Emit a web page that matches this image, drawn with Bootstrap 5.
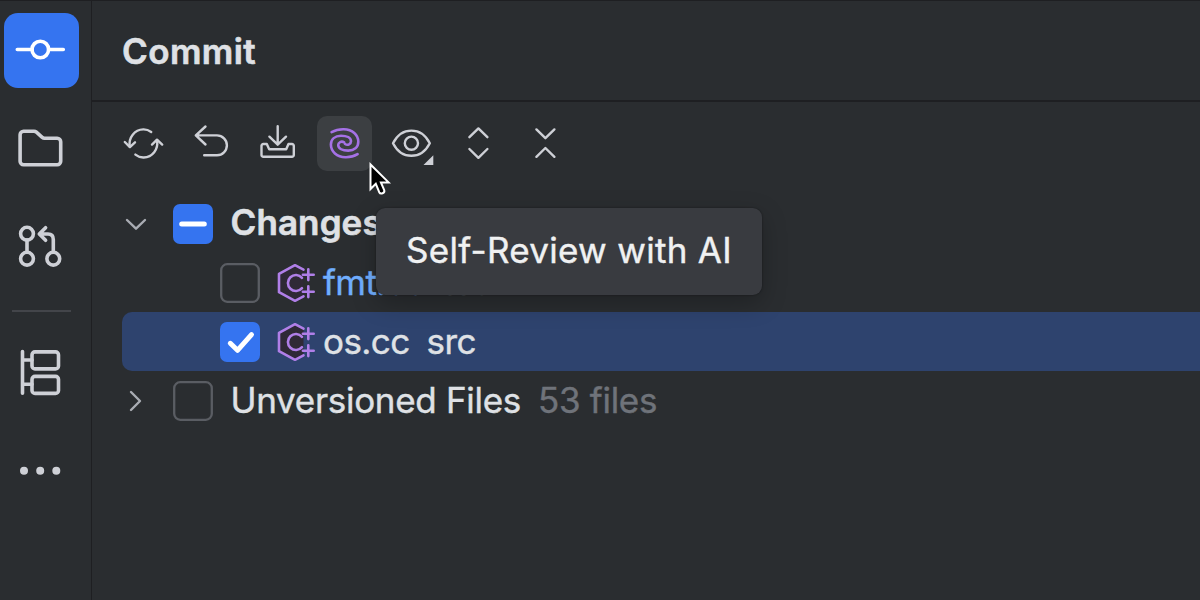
<!DOCTYPE html>
<html lang="en" data-bs-theme="dark">

<head>
    <meta charset="UTF-8">
    <meta name="viewport" content="width=device-width, initial-scale=1.0">
    <title>Commit</title>
    <link href="https://cdn.jsdelivr.net/npm/bootstrap@5.3.3/dist/css/bootstrap.min.css" rel="stylesheet">
    <style>
        body {
            background: #2a2d30;
            color: #dfe1e5;
            font-family: Inter, "Liberation Sans", sans-serif;
            font-size: 35px;
            line-height: 1;
        }

        svg {
            display: block;
            flex: none;
            fill: none;
            stroke: #ced0d6;
            stroke-linecap: round;
            stroke-linejoin: round;
        }

        .ide-window {
            height: 600px;
            border-top: 1px solid #1e1f22;
        }

        /* left tool window stripe */
        .side-stripe {
            width: 92px;
            padding: 12px 0 0 4px;
            gap: 23px;
            border-right: 1px solid #1e1f22;
        }

        .side-btn {
            width: 75px;
            height: 75px;
            border-radius: 14px;
            stroke-width: 3.6;
        }

        .side-btn.selected {
            background: #3574f0;
            stroke: #fff;
        }

        .side-divider {
            width: 59px;
            height: 2px;
            margin: 3px 0 0 8px;
            background: #43454a;
        }

        .panel-title {
            height: 100.5px;
            padding: 2px 0 0 30px;
            border-bottom: 2px solid #1e1f22;
            font-weight: 600;
            letter-spacing: 0.4px;
            -webkit-text-stroke: 0.6px;
        }

        .toolbar {
            padding: 14.5px 0 0 24px;
            gap: 12px;
        }

        .tool-btn {
            width: 55px;
            height: 55px;
            border-radius: 10px;
            stroke-width: 2.4;
        }

        .tool-btn.hovered {
            background: #3c3f42;
            stroke: #a571e6;
            stroke-width: 2.6;
        }

        .file-tree {
            padding: 23px 0 0 30px;
        }

        .tree-row {
            height: 59px;
            border-radius: 10px 0 0 10px;
        }

        .tree-row.selected {
            background: #2e436e;
        }

        .chevron {
            width: 28px;
            height: 28px;
            margin-right: 23px;
            stroke: #a9acb3;
            stroke-width: 2.4;
        }

        .check-box {
            width: 40px;
            height: 40px;
            margin-right: 17.5px;
            stroke: #5a5d63;
            stroke-width: 2.3;
        }

        .check-box.filled {
            background: #3574f0;
            border-radius: 7px;
            stroke: #fff;
            stroke-width: 5;
        }

        .file-row {
            padding-left: 98px;
        }

        .file-row .check-box {
            margin-right: 16px;
        }

        .file-icon {
            width: 40px;
            height: 40px;
            margin-right: 7px;
            stroke: #b07fe8;
            stroke-width: 2.6;
        }

        .row-label {
            padding-bottom: 1px;
            letter-spacing: -0.3px;
            -webkit-text-stroke: 0.4px;
        }

        .row-label.fw-semibold {
            padding-bottom: 2px;
            letter-spacing: 0.1px;
            -webkit-text-stroke: 0.6px;
        }

        .row-note {
            margin-left: 17px;
        }

        .file-row .row-label {
            letter-spacing: -0.6px;
        }

        .modified {
            color: #70aeff;
        }

        .file-count {
            color: #6f737a;
        }

        .hint {
            left: 376px;
            top: 207px;
            width: 386px;
            height: 87px;
            padding-bottom: 2px;
            border-radius: 9px;
            background: #393b40;
            color: #f0f1f2;
            letter-spacing: 0.3px;
            -webkit-text-stroke: 0.4px;
            box-shadow: 0 8px 24px rgba(0, 0, 0, .25), 0 0 2px rgba(0, 0, 0, .45);
        }

        .pointer {
            left: 363px;
            top: 155px;
        }
    </style>
</head>

<body>
    <div class="ide-window d-flex position-relative overflow-hidden">
        <nav class="side-stripe d-flex flex-column flex-shrink-0">
            <svg class="side-btn selected" viewBox="0 0 75 75">
                <circle cx="36.3" cy="36.5" r="8.3" />
                <path d="M13.3 36.5H28M44.6 36.5H59.3" />
            </svg>
            <svg class="side-btn" viewBox="0 0 75 75">
                <path d="M19.6 20.3H30C31 20.3 31.7 20.6 32.4 21.2L38.2 26.3C38.9 26.9 39.6 27.2 40.5 27.2H53.2A3.5 3.5 0 0 1 56.7 30.7V50.3A3.5 3.5 0 0 1 53.2 53.8H19.6A3.5 3.5 0 0 1 16.1 50.3V23.8A3.5 3.5 0 0 1 19.6 20.3Z" />
            </svg>
            <svg class="side-btn" viewBox="0 0 75 75">
                <circle cx="23" cy="24.7" r="6.4" />
                <circle cx="23" cy="49.7" r="6.4" />
                <circle cx="49.3" cy="49.7" r="6.4" />
                <path d="M23 31V43.3M49.3 43.3V30.5C49.3 27 47.3 25 44 25H36M41.6 18.7L35.3 25L41.6 31.3" />
            </svg>
            <div class="side-divider"></div>
            <svg class="side-btn" viewBox="0 0 75 75">
                <path d="M18.5 16.6V58.2M18.5 25H28M18.5 49.3H28" />
                <rect x="28" y="16.9" width="26.5" height="17" rx="3" />
                <rect x="28" y="41.4" width="26.5" height="17" rx="3" />
            </svg>
            <svg class="side-btn" viewBox="0 0 75 75">
                <path stroke-width="8" d="M20 37.8h.01M36.2 37.8h.01M52.3 37.8h.01" />
            </svg>
        </nav>

        <main class="flex-grow-1">
            <header class="panel-title d-flex align-items-center">Commit</header>

            <div class="toolbar d-flex">
                <svg class="tool-btn" viewBox="0 0 55 55">
                    <path d="M13.7 30.5C12.4 21.5 18.5 13.6 27.3 13.4C30.3 13.3 33 14.4 35.2 16" />
                    <path d="M8.8 26L13.9 31.1L19 26.3" />
                    <path d="M41 24.3C42.6 33.5 36.4 41.4 27.7 41.5C24.7 41.6 21.8 40.5 19.4 38.6" />
                    <path d="M36 28.6L41 23.7L46.2 28.6" />
                </svg>
                <svg class="tool-btn" viewBox="0 0 55 55">
                    <path d="M22.5 10.5L12.8 19.4L22.5 28.5M13.3 19.4H34A9.9 9.9 0 0 1 34 39.2H21.2" />
                </svg>
                <svg class="tool-btn" viewBox="0 0 55 55">
                    <path d="M27.7 10.3V28.3M19.4 20.7L27.7 28.7L36 20.7" />
                    <path d="M16.8 28H13.3A1.8 1.8 0 0 0 11.5 29.8V39A1.8 1.8 0 0 0 13.3 40.8H42A1.8 1.8 0 0 0 43.8 39V29.8A1.8 1.8 0 0 0 42 28H38.5L36.2 33.2H19.2Z" />
                </svg>
                <svg class="tool-btn hovered" viewBox="0 0 55 55">
                    <path id="arm" d="M14.6 16.2C18.4 14 22.8 13.1 26.8 13.2C35.4 13.4 41.3 18.9 41.3 25.8C41.3 31.3 37.2 34.6 31.2 34.6C25.4 34.6 21.2 32.6 21.2 29.1C21.2 26.3 24.4 24.7 27.2 26.4" />
                    <use href="#arm" transform="rotate(180 27.6 27.2)" />
                </svg>
                <svg class="tool-btn" viewBox="0 0 55 55">
                    <path d="M9 27.2C13 19.4 19.4 14.6 27.4 14.6S41.8 19.4 45.8 27.2C41.8 35 35.4 39.8 27.4 39.8S13 35 9 27.2Z" />
                    <circle cx="27.4" cy="27.2" r="6.6" />
                    <path fill="#ced0d6" stroke="none" d="M49.3 39.2V49H39.5Z" />
                </svg>
                <svg class="tool-btn" viewBox="0 0 55 55">
                    <path d="M18.4 21.2L27.4 12.4L36.4 21.2M18.4 33L27.4 41.8L36.4 33" />
                </svg>
                <svg class="tool-btn" viewBox="0 0 55 55">
                    <path d="M18.4 13.4L27.4 22.2L36.4 13.4M18.4 40.8L27.4 32L36.4 40.8" />
                </svg>
            </div>

            <div class="file-tree">
                <div class="tree-row d-flex align-items-center">
                    <svg class="chevron" viewBox="0 0 28 28">
                        <path d="M5 10L14 18.7L23 10" />
                    </svg>
                    <svg class="check-box filled" viewBox="0 0 40 40">
                        <path d="M8.7 20H31.3" />
                    </svg>
                    <span class="row-label fw-semibold">Changes</span>
                </div>
                <div class="tree-row file-row d-flex align-items-center">
                    <svg class="check-box" viewBox="0 0 40 40">
                        <rect x="1.2" y="1.2" width="37.6" height="37.6" rx="6" />
                    </svg>
                    <svg class="file-icon" viewBox="0 0 40 40">
                        <g id="cpp-file">
                            <path fill="#2f2936" d="M27.5 6.6L19 2.2L3 10.8V29.2L19 37.8L27.5 33.4" />
                            <path d="M26 14.8A8 8 0 1 0 26 25.2M32.3 6.3V17.1M26.9 11.7H37.7M32.3 23.3V34.1M26.9 28.7H37.7" />
                        </g>
                    </svg>
                    <span class="row-label modified">fmt.cc</span>
                    <span class="row-label row-note file-count">src</span>
                </div>
                <div class="tree-row file-row selected d-flex align-items-center">
                    <svg class="check-box filled" viewBox="0 0 40 40">
                        <path d="M10.3 21.3L17.5 28.3L31.5 12.7" />
                    </svg>
                    <svg class="file-icon" viewBox="0 0 40 40">
                        <use href="#cpp-file" />
                    </svg>
                    <span class="row-label">os.cc</span>
                    <span class="row-label row-note">src</span>
                </div>
                <div class="tree-row d-flex align-items-center">
                    <svg class="chevron" viewBox="0 0 28 28">
                        <path d="M9 5L18 14L9 23" />
                    </svg>
                    <svg class="check-box" viewBox="0 0 40 40">
                        <rect x="1.2" y="1.2" width="37.6" height="37.6" rx="6" />
                    </svg>
                    <span class="row-label">Unversioned Files</span>
                    <span class="row-label row-note file-count">53 files</span>
                </div>
            </div>
        </main>

        <div class="hint position-absolute d-flex align-items-center justify-content-center">Self-Review with AI</div>

        <svg class="pointer position-absolute" width="32" height="42" viewBox="0 0 32 42">
            <path fill="#000" stroke="#fff" stroke-width="2" stroke-linejoin="miter" d="M7.5 8.5V33L12.8 27.8L16.2 36.2C17.6 38.9 22.2 37 21.2 34L17.9 26.4H25.6Z" />
        </svg>
    </div>

    <script src="https://cdn.jsdelivr.net/npm/bootstrap@5.3.3/dist/js/bootstrap.bundle.min.js"></script>
</body>

</html>
